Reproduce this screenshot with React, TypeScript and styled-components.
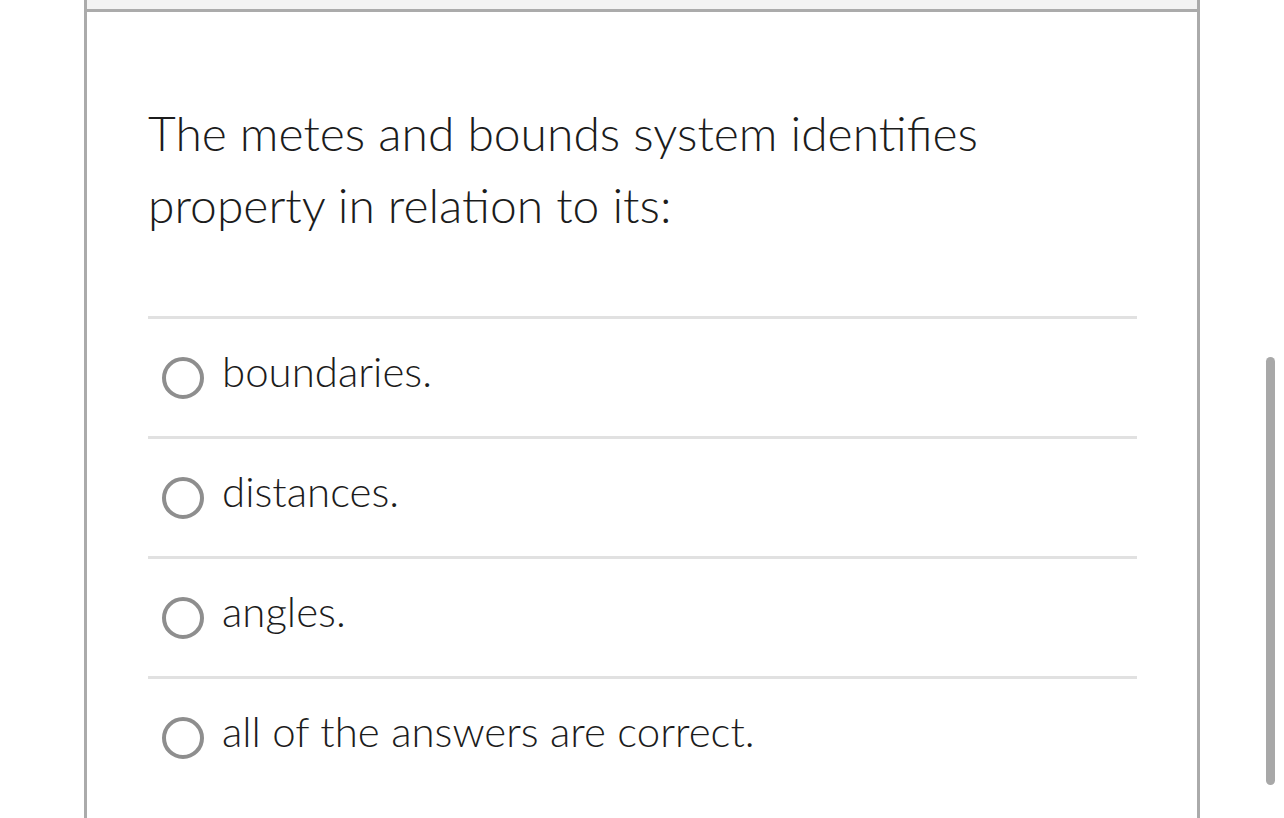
import React from "react";
import styled, { createGlobalStyle } from "styled-components";

const GlobalStyle = createGlobalStyle`
  html, body {
    margin: 0;
    padding: 0;
    background: #ffffff;
    overflow: hidden;
  }
  body {
    font-family: "Lato Light", Lato, "Open Sans", "Liberation Sans", sans-serif;
  }
`;

const Page = styled.div`
  position: relative;
  width: 1284px;
  height: 818px;
  overflow: hidden;
  display: flex;
  background: #ffffff;
`;

const Card = styled.section`
  margin-left: 84px;
  width: 1116px;
  height: 818px;
  box-sizing: border-box;
  border-left: 3px solid #ababab;
  border-right: 3px solid #ababab;
  display: flex;
  flex-direction: column;
`;

const CardHeader = styled.div`
  height: 9px;
  background: #f3f3f3;
  border-bottom: 3px solid #ababab;
  flex: none;
`;

const Body = styled.div`
  padding: 85px 60px 0 61px;
  display: flex;
  flex-direction: column;
`;

const Question = styled.p`
  margin: 0 0 75px 0;
  font-size: 48px;
  line-height: 72px;
  font-weight: 300;
  color: #1c1c1c;
  width: 900px;
`;

const OptionList = styled.ul`
  list-style: none;
  margin: 0;
  padding: 0;
`;

const OptionRow = styled.li`
  height: 120px;
  box-sizing: border-box;
  border-top: 3px solid #e1e1e1;
  display: flex;
  align-items: center;
  padding-left: 14px;
  gap: 18px;
`;

const Radio = styled.span`
  width: 42px;
  height: 42px;
  box-sizing: border-box;
  border-radius: 50%;
  border: 4.5px solid #8e8e8e;
  flex: none;
`;

const OptionText = styled.span`
  font-size: 42px;
  line-height: 48px;
  font-weight: 300;
  color: #1c1c1c;
  margin-bottom: 14px;
`;

const ScrollThumb = styled.div`
  position: absolute;
  left: 1266px;
  top: 357px;
  width: 9px;
  height: 428px;
  border-radius: 5px;
  background: #a8a8a8;
`;

const options = [
  "boundaries.",
  "distances.",
  "angles.",
  "all of the answers are correct.",
];

export default function App() {
  return (
    <>
      <GlobalStyle />
      <Page>
        <Card>
          <CardHeader />
          <Body>
            <Question>
              The metes and bounds system identifies property in relation to its:
            </Question>
            <OptionList>
              {options.map((o) => (
                <OptionRow key={o}>
                  <Radio />
                  <OptionText>{o}</OptionText>
                </OptionRow>
              ))}
            </OptionList>
          </Body>
        </Card>
        <ScrollThumb />
      </Page>
    </>
  );
}
